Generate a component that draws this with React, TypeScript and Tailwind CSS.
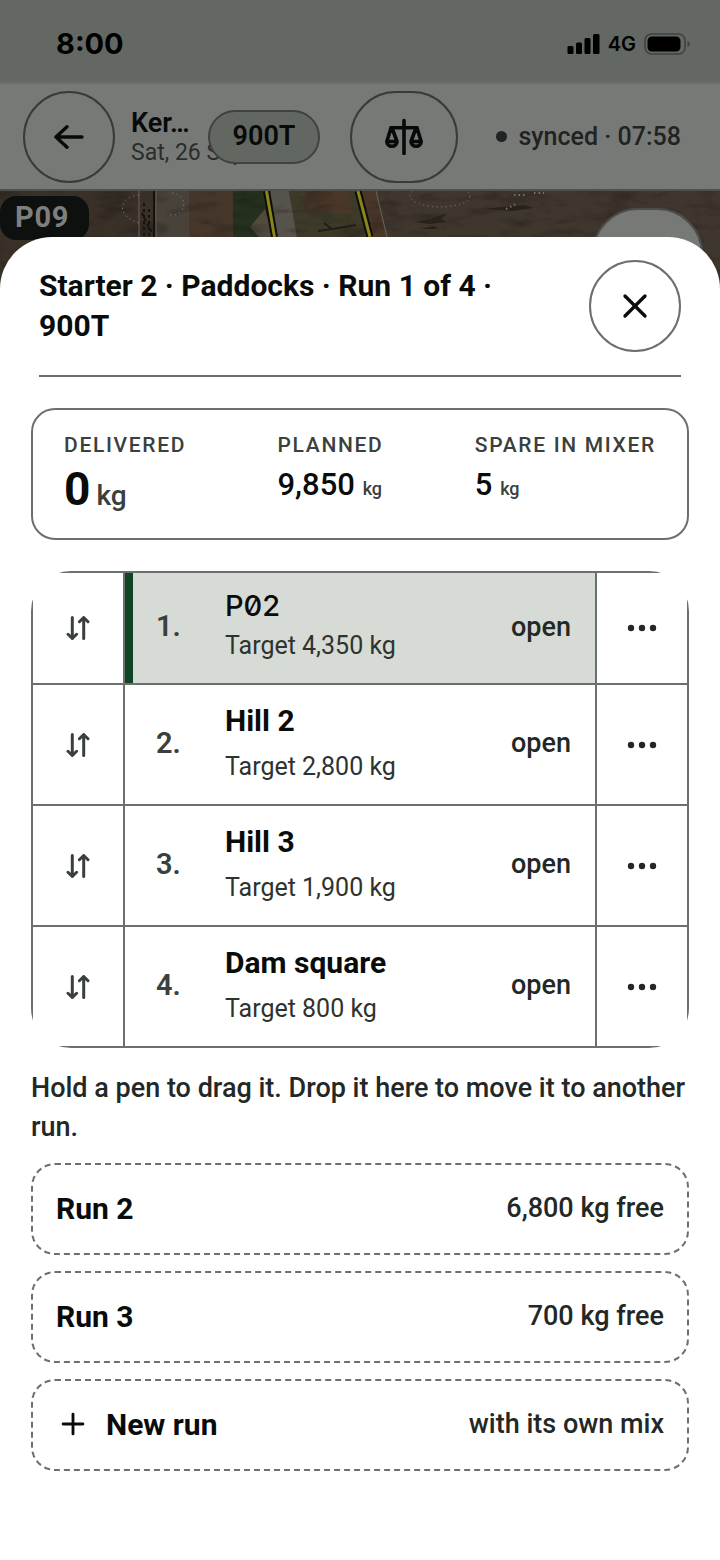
import { Plus, X } from 'lucide-react'

type Pen = { id: number; name: string; target: string; status: string }
type DropRun = { id: string; name: string; note: string; isNew?: boolean }

const pens: Pen[] = [
  { id: 1, name: 'P02', target: '4,350', status: 'open' },
  { id: 2, name: 'Hill 2', target: '2,800', status: 'open' },
  { id: 3, name: 'Hill 3', target: '1,900', status: 'open' },
  { id: 4, name: 'Dam square', target: '800', status: 'open' },
]

const activeId = 1

const runs: DropRun[] = [
  { id: 'run-2', name: 'Run 2', note: '6,800 kg free' },
  { id: 'run-3', name: 'Run 3', note: '700 kg free' },
  { id: 'new', name: 'New run', note: 'with its own mix', isNew: true },
]

function StatusBar() {
  return (
    <div className="flex h-[84px] items-center justify-between border-b-2 border-[#6c6e6c] bg-[#636863] pl-14 pr-[30px] pt-1.5 font-['Inter',sans-serif] text-black">
      <span className="text-[29px] font-bold leading-8">8:00</span>
      <div className="flex items-center gap-2">
        <svg width="33" height="20" viewBox="0 0 33 20" fill="currentColor" aria-hidden="true">
          <rect x="0.500" y="12" width="6" height="8" rx="1.500" />
          <rect x="9" y="8.500" width="6" height="11.500" rx="1.500" />
          <rect x="17.500" y="4" width="6" height="16" rx="1.500" />
          <rect x="26" y="0" width="6.500" height="20" rx="1.500" />
        </svg>
        <span className="text-xl font-semibold leading-6">4G</span>
        <svg width="46" height="22" viewBox="0 0 46 22" aria-hidden="true">
          <rect x="1" y="1" width="40" height="20" rx="6.500" fill="none" stroke="#3f4340" strokeWidth="1.600" />
          <rect x="3.500" y="3.500" width="33" height="15" rx="4.500" fill="currentColor" />
          <path d="M43.500 8v6c1.600-.5 2.200-1.600 2.200-3s-.6-2.500-2.200-3z" fill="#3f4340" />
        </svg>
      </div>
    </div>
  )
}

function BackIcon() {
  return (
    <svg width="30" height="24" viewBox="0 0 30 24" fill="none" stroke="currentColor" strokeWidth="3.400"
      strokeLinecap="round" strokeLinejoin="round" aria-hidden="true">
      <path d="M28 12H2M13 1.800L2 12l11 10.200" />
    </svg>
  )
}

function ScaleIcon() {
  return (
    <svg width="42" height="37" viewBox="0 0 42 37" fill="none" stroke="currentColor" strokeWidth="3.600"
      strokeLinecap="round" strokeLinejoin="round" aria-hidden="true">
      <path d="M21 2.500v33M8 9.800h26" />
      <path d="M8 10L3.800 23.500M9 10l5 13.500M3.800 23.500H14M3.800 23.500a5.100 4.800 0 0 0 10.200 0" />
      <path d="M33 10l-5 13.500M34 10l4.200 13.500M28 23.500h10.200M28 23.500a5.100 4.800 0 0 0 10.200 0" />
    </svg>
  )
}

function AppHeader() {
  return (
    <header className="flex h-[107px] items-center border-b-2 border-[#4d504e] bg-[#777977] px-[23px] text-[#080a09]">
      <button type="button" aria-label="Back"
        className="flex size-[92px] shrink-0 items-center justify-center rounded-full border-2 border-[#383b39]">
        <BackIcon />
      </button>
      <div className="ml-4 w-[61px] shrink-0 whitespace-nowrap">
        <div className="text-[27px] font-semibold leading-8">Ker…</div>
        <div className="text-[23px] leading-7 text-[#2a2d2b]">Sat, 26 Sep</div>
      </div>
      <button type="button"
        className="relative ml-4 h-[54px] w-28 shrink-0 rounded-full border-2 border-[#3f4240] bg-[#626762] text-[27px] font-semibold">
        900T
      </button>
      <button type="button" aria-label="Scale"
        className="ml-[30px] flex h-[92px] w-[108px] shrink-0 items-center justify-center rounded-[46px] border-2 border-[#383b39]">
        <ScaleIcon />
      </button>
      <div className="ml-auto flex items-center gap-3 whitespace-nowrap pr-4 text-[25px] font-medium text-[#1f2321]">
        <span className="size-[11px] rounded-full bg-[#1f2321]" />
        synced · 07:58
      </div>
    </header>
  )
}

function PaddockMap() {
  return (
    <div className="relative h-[110px] overflow-hidden bg-[#3a322b]">
      <svg className="size-full" viewBox="0 0 720 110" preserveAspectRatio="xMidYMin slice" aria-hidden="true">
        <defs>
          <filter id="soil" x="0" y="0" width="100%" height="100%" colorInterpolationFilters="sRGB">
            <feTurbulence type="fractalNoise" baseFrequency="0.03 0.09" numOctaves="5" seed="4" />
            <feColorMatrix values="0 0 0 0 0.09  0 0 0 0 0.08  0 0 0 0 0.06  3 0 0 0 -1.400" />
          </filter>
        </defs>
        <rect width="720" height="110" fill="#3f362e" />
        <path d="M0 0h156v110H0z" fill="#393028" />
        <path d="M157 0h32v46h-32z" fill="#48423a" />
        <path d="M189 0h44v46h-44z" fill="#46372a" />
        <path d="M233 0h34l8 46h-42z" fill="#25311f" />
        <path d="M250 36l15-18 8 28h-14z" fill="#524a3d" />
        <path d="M270 0h19l8 46h-22z" fill="#55534c" />
        <path d="M289 0h69l11 46h-72z" fill="#3d3a29" />
        <path d="M300 0h48l6 24-46-5z" fill="#493729" />
        <path d="M362 0h14l11 46h-15z" fill="#4a3729" />
        <rect width="720" height="110" filter="url(#soil)" opacity="0.300" />
        <path d="M318 40l14-2 24-4M324 32l8 6" fill="none" stroke="#1f1f17" strokeWidth="2" />
        <path d="M415 31l16-3 16-6-6 6 6 3-18 2zM484 18l18-2 22-2 10 3-22 3zM420 38l14-3 4 3z" fill="#28221c" />
        <path d="M139 0v46M376 0l11 46" stroke="#6b655b" strokeWidth="1" />
        <path d="M142 22l10 20M144 12v34M149 18v28" stroke="#17130f" strokeWidth="2" strokeDasharray="3 3" />
        <path d="M154 0v46" stroke="#14110f" strokeWidth="2" />
        <path d="M156 0v46" stroke="#6b655b" strokeWidth="1" />
        <path d="M266.500 0l8 46M358 0l12 46" stroke="#0e0e08" strokeWidth="7" />
        <path d="M266.500 0l8 46M358 0l12 46" stroke="#8c8419" strokeWidth="3" />
        <g fill="none" stroke="#77716a" strokeWidth="1" strokeDasharray="1.500 3">
          <path d="M139 4c-22 3-22 22 0 28M172 2c18 2 14 24-2 22" />
          <ellipse cx="440" cy="5" rx="30" ry="11" />
          <path d="M514 4h12M534 2h10M506 18l12-6" strokeWidth="2" />
        </g>
      </svg>
      <span className="absolute left-0 top-[5px] flex h-11 w-[89px] items-center rounded-2xl bg-[#0d100e] pl-[15px] text-[29px] font-bold tracking-wide text-[#7d807e]">
        P09
      </span>
      <span className="absolute right-[17px] top-[17px] h-[92px] w-[111px] rounded-[46px] border-2 border-[#4b4e4c] bg-[#777977]" />
    </div>
  )
}

function SwapIcon() {
  return (
    <svg width="24" height="24" viewBox="0 0 24 24" fill="none" stroke="currentColor" strokeWidth="3"
      strokeLinecap="round" strokeLinejoin="round" aria-hidden="true">
      <path d="M6.300 1.500v21M2 18.300l4.300 4.200 4.300-4.200" />
      <path d="M17.700 22.500v-21M13.400 5.700l4.300-4.200 4.300 4.200" />
    </svg>
  )
}

function DotsIcon() {
  return (
    <svg width="30" height="8" viewBox="0 0 30 8" fill="currentColor" aria-hidden="true">
      <circle cx="4" cy="4" r="3.200" />
      <circle cx="15" cy="4" r="3.200" />
      <circle cx="26" cy="4" r="3.200" />
    </svg>
  )
}

function PenRow({ pen, active }: { pen: Pen; active: boolean }) {
  return (
    <li className={active ? 'box-content flex h-[110px]' : 'box-content flex h-[119px]'}>
      <button type="button" aria-label={`Move ${pen.name}`}
        className="flex w-[90px] shrink-0 items-center justify-center text-[#3a403c]">
        <SwapIcon />
      </button>
      <div className={active
        ? 'flex grow items-center border-x-2 border-[#6b706d] bg-[#d6dbd5] pb-0.5 pr-6 shadow-[inset_8px_0_0_#0f4523]'
        : 'flex grow items-center border-x-2 border-[#6b706d] pb-0.5 pr-6'}>
        <span className="w-[100px] shrink-0 pl-[31px] text-[29px] font-semibold text-[#3a403c]">{pen.id}.</span>
        <div className={active ? 'flex grow flex-col gap-1 pb-0.5' : 'flex grow flex-col gap-2 pb-0.5'}>
          <span className={active
            ? "font-['Inter',sans-serif] text-[29px] font-medium leading-9 slashed-zero text-[#0a0c0b]"
            : 'text-[30px] font-bold leading-10 text-[#0a0c0b]'}>
            {pen.name}
          </span>
          <span className="text-[25px] leading-9 text-[#2e3330]">Target {pen.target} kg</span>
        </div>
        <span className="text-[27px] font-medium text-[#232826]">{pen.status}</span>
      </div>
      <button type="button" aria-label={`More for ${pen.name}`}
        className="flex w-[90px] shrink-0 items-center justify-center text-[#232826]">
        <DotsIcon />
      </button>
    </li>
  )
}

export default function App() {
  return (
    <div className="min-h-screen bg-white font-['Roboto',sans-serif] text-[#0a0c0b]">
      <StatusBar />
      <AppHeader />
      <PaddockMap />

      <main role="dialog" aria-labelledby="run-title"
        className="relative -mt-16 rounded-t-[52px] bg-white px-[31px] pb-[90px] pt-[23px]">
        <div className="mx-2 flex items-start justify-between border-b-2 border-[#6b706d] pb-[23px]">
          <h1 id="run-title" className="w-[480px] pt-[6px] text-[30px] font-bold leading-10">
            Starter 2 · Paddocks · Run 1 of 4 · 900T
          </h1>
          <button type="button" aria-label="Close"
            className="flex size-[92px] shrink-0 items-center justify-center rounded-full border-2 border-[#6b706d]">
            <X size={40} strokeWidth={2} />
          </button>
        </div>

        {/* Totals */}
        <dl className="mt-[31px] flex h-[132px] justify-between rounded-3xl border-2 border-[#6b706d] px-[31px] pt-5">
          <div>
            <dt className="text-[21px] font-medium uppercase leading-[31px] tracking-[0.08em] text-[#3a403c]">Delivered</dt>
            <dd className="text-[46px] font-bold leading-[56px]">
              0<span className="ml-1.5 text-[28px] font-medium text-[#3a403c]">kg</span>
            </dd>
          </div>
          <div>
            <dt className="text-[21px] font-medium uppercase leading-[31px] tracking-[0.08em] text-[#3a403c]">Planned</dt>
            <dd className="text-[31px] font-medium leading-[48px]">
              9,850 <span className="text-lg text-[#3a403c]">kg</span>
            </dd>
          </div>
          <div>
            <dt className="text-[21px] font-medium uppercase leading-[31px] tracking-[0.08em] text-[#3a403c]">Spare in mixer</dt>
            <dd className="text-[31px] font-medium leading-[48px]">
              5 <span className="text-lg text-[#3a403c]">kg</span>
            </dd>
          </div>
        </dl>

        {/* Pens */}
        <div className="mt-[31px] overflow-hidden rounded-[40px]">
          <ol className="divide-y-2 divide-[#6b706d] border-2 border-[#6b706d]">
            {pens.map(p => <PenRow key={p.id} pen={p} active={p.id === activeId} />)}
          </ol>
        </div>

        <p className="mt-[21px] text-[27px] font-medium leading-[39px] text-[#232826]">
          Hold a pen to drag it. Drop it here to move it to another run.
        </p>

        {/* Drop targets */}
        <div className="mt-4 flex flex-col gap-4">
          {runs.map(r => (
            <button key={r.id} type="button"
              className="flex h-[92px] items-center justify-between rounded-3xl border-2 border-dashed border-[#6b706d] px-[23px] pb-0.5">
              <span className="flex items-center gap-4 text-[30px] font-bold">
                {r.isNew && <Plus size={34} strokeWidth={2} />}
                {r.name}
              </span>
              <span className="text-[27px] font-medium text-[#232826]">{r.note}</span>
            </button>
          ))}
        </div>
      </main>
    </div>
  )
}
